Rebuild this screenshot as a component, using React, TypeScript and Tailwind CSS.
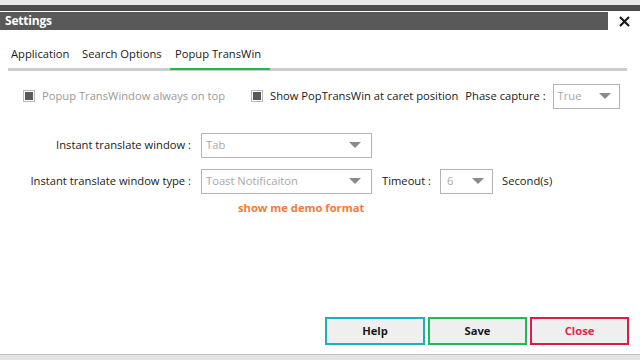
import React from "react";

const Arrow = () => (
  <svg width="12" height="7" viewBox="0 0 12 7" className="shrink-0">
    <path d="M0 0 L12 0 L6 6 Z" fill="#8a8a8a" />
  </svg>
);

function Select({ value, w, pl = "pl-[4px]", pr = "pr-[10px]" }: { value: string; w: string; pl?: string; pr?: string }) {
  return (
    <div className={`${w} h-[25px] border border-[#b4b4b4] bg-white flex items-center justify-between ${pl} ${pr}`}>
      <span className="text-[#a8a8a8] text-[11.2px] whitespace-nowrap">{value}</span>
      <Arrow />
    </div>
  );
}

function Check({ label, dim }: { label: string; dim?: boolean }) {
  return (
    <div className="flex items-center gap-[7px] whitespace-nowrap">
      <div className="w-[12px] h-[12px] border border-[#b8b8b8] bg-white flex items-center justify-center">
        <div className="w-[8px] h-[8px] bg-[#5a5a5a]" />
      </div>
      <span className={`text-[11.2px] ${dim ? "text-[#9a9a9a]" : "text-[#1a1a1a]"}`}>{label}</span>
    </div>
  );
}

export default function App() {
  return (
    <div className="w-[640px] h-[360px] bg-white flex flex-col overflow-hidden whitespace-nowrap" style={{ fontFamily: '"Open Sans", "Noto Sans", sans-serif' }}>
      <div className="h-[5px] bg-[#e6e6e6] shrink-0" />
      <div className="h-[6px] bg-[#4a4a4a] shrink-0" />
      <div className="h-[1px] bg-white shrink-0" />
      <div className="h-[18px] flex shrink-0">
        <div className="w-[608px] bg-[#595959] flex items-center pl-[5px]">
          <span className="text-white font-bold text-[12px] tracking-[-0.2px]">Settings</span>
        </div>
        <div className="flex-1 flex items-center justify-center">
          <svg width="11" height="11" viewBox="0 0 11 11">
            <path d="M1 1 L10 10 M10 1 L1 10" stroke="#1a1a1a" strokeWidth="2.2" />
          </svg>
        </div>
      </div>
      <div className="mt-[12px] ml-[8px] w-[619px] shrink-0">
        <div className="flex text-[11.2px] text-[#1a1a1a] h-[24px] items-center">
          <div className="pl-[3px] w-[74px]">Application</div>
          <div className="w-[90px]">Search Options</div>
          <div className="pl-[3px] w-[100px]">Popup TransWin</div>
        </div>
        <div className="h-[3px] bg-[#cccccc] relative mt-[2px]">
          <div className="absolute left-[162px] top-0 w-[100px] h-[2px] bg-[#1db954]" />
        </div>
      </div>
      <div className="flex items-center mt-[12px] pl-[23px] h-[26px] shrink-0">
        <Check label="Popup TransWindow always on top" dim />
        <div className="w-[26px]" />
        <Check label="Show PopTransWin at caret position" />
        <span className="ml-[7px] text-[11.2px] text-[#1a1a1a]">Phase capture :</span>
        <div className="ml-[7px]">
          <Select value="True" w="w-[67px]" pl="pl-[4px]" pr="pr-[8px]" />
        </div>
      </div>
      <div className="flex flex-col gap-[11px] mt-[24px] shrink-0">
        <div className="flex items-center h-[25px]">
          <span className="w-[191px] text-right text-[11.2px] text-[#1a1a1a]">Instant translate window :</span>
          <div className="ml-[10px]">
            <Select value="Tab" w="w-[171px]" />
          </div>
        </div>
        <div className="flex items-center h-[25px]">
          <span className="w-[191px] text-right text-[11.2px] text-[#1a1a1a]">Instant translate window type :</span>
          <div className="ml-[10px]">
            <Select value="Toast Notificaiton" w="w-[171px]" />
          </div>
          <span className="ml-[10px] text-[11.2px] text-[#1a1a1a]">Timeout :</span>
          <div className="ml-[9px]">
            <Select value="6" w="w-[53px]" pl="pl-[6px]" pr="pr-[8px]" />
          </div>
          <span className="ml-[9px] text-[11.2px] text-[#1a1a1a]">Second(s)</span>
        </div>
      </div>
      <div className="mt-[0px] pl-[238px] shrink-0">
        <span className="text-[11.2px] font-bold text-[#f47b3a]">show me demo format</span>
      </div>
      <div className="flex-1" />
      <div className="flex justify-end gap-[3px] pr-[11px] shrink-0">
        <button className="w-[100px] h-[28px] border-2 border-[#17b1bb] bg-[#efefef] text-[11.2px] font-bold text-[#1a1a1a]">Help</button>
        <button className="w-[99px] h-[28px] border-2 border-[#1fba5a] bg-[#efefef] text-[11.2px] font-bold text-[#1a1a1a]">Save</button>
        <button className="w-[99px] h-[28px] border-2 border-[#dc1c44] bg-[#efefef] text-[11.2px] font-bold text-[#e0244c]">Close</button>
      </div>
      <div className="h-[9px] shrink-0" />
      <div className="h-[1px] bg-[#c4c4c4] shrink-0" />
      <div className="h-[5px] bg-[#e3e3e3] shrink-0" />
    </div>
  );
}
